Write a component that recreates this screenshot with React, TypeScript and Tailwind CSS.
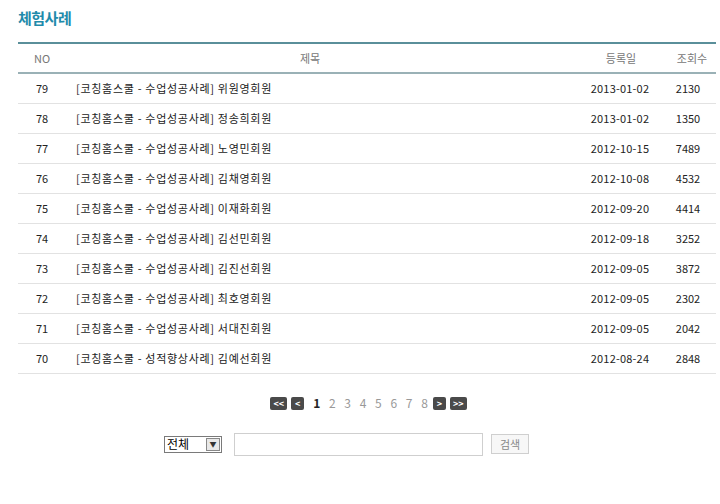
const rows = [
  { no: 79, title: "[코칭홈스쿨 - 수업성공사례] 위원영회원", date: "2013-01-02", views: 2130 },
  { no: 78, title: "[코칭홈스쿨 - 수업성공사례] 정송희회원", date: "2013-01-02", views: 1350 },
  { no: 77, title: "[코칭홈스쿨 - 수업성공사례] 노영민회원", date: "2012-10-15", views: 7489 },
  { no: 76, title: "[코칭홈스쿨 - 수업성공사례] 김채영회원", date: "2012-10-08", views: 4532 },
  { no: 75, title: "[코칭홈스쿨 - 수업성공사례] 이재화회원", date: "2012-09-20", views: 4414 },
  { no: 74, title: "[코칭홈스쿨 - 수업성공사례] 김선민회원", date: "2012-09-18", views: 3252 },
  { no: 73, title: "[코칭홈스쿨 - 수업성공사례] 김진선회원", date: "2012-09-05", views: 3872 },
  { no: 72, title: "[코칭홈스쿨 - 수업성공사례] 최호영회원", date: "2012-09-05", views: 2302 },
  { no: 71, title: "[코칭홈스쿨 - 수업성공사례] 서대진회원", date: "2012-09-05", views: 2042 },
  { no: 70, title: "[코칭홈스쿨 - 성적향상사례] 김예선회원", date: "2012-08-24", views: 2848 },
];

const pages = [1, 2, 3, 4, 5, 6, 7, 8];

function PageButton({ label, wide }: { label: string; wide?: boolean }) {
  return (
    <span
      className={`flex h-[13px] items-center justify-center rounded-[2px] bg-[#4a4a4a] text-[9px] font-bold leading-none text-white ${
        wide ? "w-[17px]" : "w-[13px]"
      }`}
    >
      {label}
    </span>
  );
}

export default function App() {
  return (
    <div
      className="h-[504px] w-[720px] bg-white pl-[18px] pr-[4px] pt-[8px]"
      style={{ fontFamily: '"Noto Sans CJK KR", "Liberation Sans", sans-serif' }}
    >
      <h1 className="text-[15px] font-bold leading-[20px] tracking-[-0.5px] text-[#1f8bab]">
        체험사례
      </h1>

      <table className="mt-[14px] w-[698px] border-collapse border-t-2 border-[#5a8f9a] text-[11px]">
        <thead>
          <tr className="h-[30px] border-b-2 border-[#9ab1b6] text-[#777]">
            <th className="w-[48px] text-center font-normal">NO</th>
            <th className="text-center font-normal">제목</th>
            <th className="w-[110px] pl-[24px] text-center font-normal">등록일</th>
            <th className="w-[52px] pl-[4px] text-center font-normal">조회수</th>
          </tr>
        </thead>
        <tbody>
          {rows.map((row) => (
            <tr key={row.no} className="h-[30px] border-b border-[#e2e2e2] text-[#222]">
              <td className="text-center">{row.no}</td>
              <td className="pl-[10px] tracking-[0.7px]">{row.title}</td>
              <td className="pl-[22px] text-center tracking-[0.2px]">{row.date}</td>
              <td className="pr-[4px] text-center">{row.views}</td>
            </tr>
          ))}
        </tbody>
      </table>

      <div className="mt-[23px] flex w-[698px] items-center justify-center gap-[4px] pl-[3px]">
        <PageButton label="<<" wide />
        <PageButton label="<" />
        <div className="ml-[5px] mr-[1px] flex items-center gap-[8.7px] text-[12px] leading-none text-[#999]">
          {pages.map((p) => (
            <span key={p} className={p === 1 ? "font-bold text-[#222]" : ""}>
              {p}
            </span>
          ))}
        </div>
        <PageButton label=">" />
        <PageButton label=">>" wide />
      </div>

      <div className="mt-[23px] flex items-center pl-[146px]">
        <div className="flex h-[17px] w-[58px] items-center justify-between border border-[#7a7a7a] bg-white pl-[2px] pr-[1px] text-[12px] text-black">
          <span className="leading-none">전체</span>
          <span className="flex h-[13px] w-[14px] items-center justify-center border border-[#888] bg-[#e8e8e8] text-[7px] text-[#333]">
            ▼
          </span>
        </div>
        <div className="ml-[12px] h-[23px] w-[249px] border border-[#cfcfcf] bg-white" />
        <button
          type="button"
          className="ml-[8px] flex h-[20px] w-[38px] items-center justify-center border border-[#cfcfcf] bg-[#f7f7f7] text-[11px] text-[#888]"
        >
          검색
        </button>
      </div>
    </div>
  );
}
